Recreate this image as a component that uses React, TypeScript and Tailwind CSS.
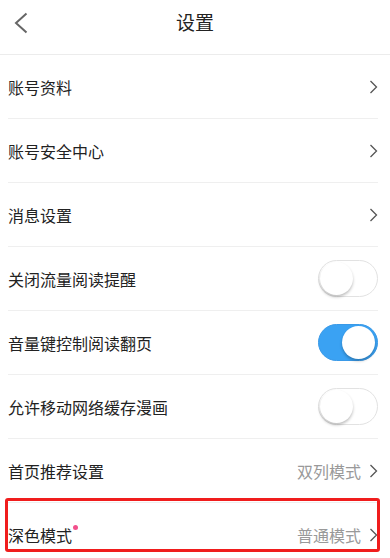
type Item =
  | { label: string; kind: 'link'; value?: string; dot?: boolean }
  | { label: string; kind: 'toggle'; on: boolean };

const items: Item[] = [
  { label: '账号资料', kind: 'link' },
  { label: '账号安全中心', kind: 'link' },
  { label: '消息设置', kind: 'link' },
  { label: '关闭流量阅读提醒', kind: 'toggle', on: false },
  { label: '音量键控制阅读翻页', kind: 'toggle', on: true },
  { label: '允许移动网络缓存漫画', kind: 'toggle', on: false },
  { label: '首页推荐设置', kind: 'link', value: '双列模式' },
  { label: '深色模式', kind: 'link', value: '普通模式', dot: true },
];

function Toggle({ on }: { on: boolean }) {
  return (
    <div
      className={
        on
          ? 'w-[60px] h-[37px] rounded-full bg-[#3aa2f3] border border-[#3a9ae8] flex items-center justify-end pr-[2px]'
          : 'w-[60px] h-[37px] rounded-full bg-white border border-[#e2e2e2] flex items-center justify-start pl-[1px]'
      }
    >
      <div className="w-[33px] h-[33px] rounded-full bg-white shadow-[0_2px_3px_rgba(0,0,0,0.25)]" />
    </div>
  );
}

function Arrow() {
  return (
    <svg width="9" height="14" viewBox="0 0 9 14" fill="none" className="text-[#555]">
      <path d="M1.5 1l6 6-6 6" stroke="currentColor" strokeWidth="1.3" />
    </svg>
  );
}

export default function App() {
  return (
    <div
      className="w-[390px] h-[558px] overflow-hidden bg-white relative text-[#222]"
      style={{ fontFamily: '"Noto Sans CJK SC", "Noto Sans", sans-serif' }}
    >
      <div className="h-[55px] border-b border-[#ececec] flex items-center justify-center relative">
        <svg
          width="14"
          height="22"
          viewBox="0 0 14 22"
          fill="none"
          className="absolute left-[14px] top-[12px] text-[#666]"
        >
          <path d="M12.5 1.5L2 11l10.5 9.5" stroke="currentColor" strokeWidth="2" />
        </svg>
        <span className="text-[19px] -mt-[9px]">设置</span>
      </div>
      <div className="pl-[8px] pr-[12px]">
        {items.map((item) => (
          <div
            key={item.label}
            className="h-[64px] border-b border-[#efefef] flex items-center justify-between"
          >
            <span className="text-[16px] relative">
              {item.label}
              {item.kind === 'link' && item.dot && (
                <span className="absolute -right-[6px] top-[2px] w-[5px] h-[5px] rounded-full bg-[#f2508c]" />
              )}
            </span>
            {item.kind === 'toggle' ? (
              <Toggle on={item.on} />
            ) : (
              <div className="flex items-center">
                {item.value && <span className="text-[16px] text-[#999] mr-[8px]">{item.value}</span>}
                <Arrow />
              </div>
            )}
          </div>
        ))}
      </div>
      <div className="absolute left-[5px] top-[498px] w-[375px] h-[54px] border-[3px] border-[#f01d1d] rounded-[3px] pointer-events-none" />
    </div>
  );
}
